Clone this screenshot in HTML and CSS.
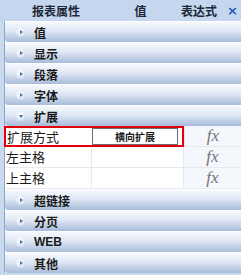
FILE: index.html
```html
<html>
  <head>
    <title>报表属性</title>
    <link rel="stylesheet" href="styles.css">
  </head>
  <body>
    <div class="panel">
      <div class="header">
        <span class="h-name">报表属性</span>
        <span class="h-value">值</span>
        <span class="h-expr">表达式</span>
        <span class="h-close">×</span>
      </div>
      <div class="body">
        <div class="group"><span class="dot"></span>值</div>
        <div class="group"><span class="dot"></span>显示</div>
        <div class="group"><span class="dot"></span>段落</div>
        <div class="group"><span class="dot"></span>字体</div>
        <div class="group open"><span class="dot"></span>扩展</div>
        <div class="prop selected">
          <div class="p-name">扩展方式</div>
          <div class="p-value"><span class="box">横向扩展</span></div>
          <div class="p-expr">fx</div>
        </div>
        <div class="prop">
          <div class="p-name">左主格</div>
          <div class="p-value"></div>
          <div class="p-expr">fx</div>
        </div>
        <div class="prop">
          <div class="p-name">上主格</div>
          <div class="p-value"></div>
          <div class="p-expr">fx</div>
        </div>
        <div class="group"><span class="dot"></span>超链接</div>
        <div class="group"><span class="dot"></span>分页</div>
        <div class="group latin"><span class="dot"></span>WEB</div>
        <div class="group"><span class="dot"></span>其他</div>
      </div>
    </div>
  </body>
</html>
```

FILE: styles.css
```css
body {
  margin: 0;
  font-family: "Noto Sans CJK SC", "Liberation Sans", sans-serif;
  color: #1a1a1a;
  background: #ffffff;
}
.panel {
  width: 241px;
  height: 275px;
  overflow: hidden;
  background: #c9d9ee;
}
/* header row */
.header {
  display: flex;
  align-items: center;
  height: 21px;
  background: #c5d7ee;
  font-size: 12px;
  font-weight: bold;
  color: #1e2a3a;
}
.h-name {
  width: 100px;
  padding-left: 32px;
  box-sizing: border-box;
}
.h-value {
  width: 81px;
  text-align: center;
}
.h-expr {
  width: 46px;
}
.h-close {
  color: #1c56b8;
  font-family: "DejaVu Sans", sans-serif;
  font-size: 13px;
}
.body {
  margin-left: 4px;
  border-left: 1px solid #8ea5c8;
  background: #ffffff;
}
/* collapsible groups */
.group {
  display: flex;
  align-items: center;
  height: 20px;
  border-top: 1px solid #ffffff;
  border-radius: 3px 0 0 3px;
  background: linear-gradient(#f6f9fe, #dfe7f3 45%, #a8bbd9);
  font-size: 12px;
  font-weight: bold;
  color: #1a1a1a;
}
.group.latin {
  font-family: "Liberation Sans", sans-serif;
  font-size: 12px;
}
.dot {
  position: relative;
  width: 10px;
  height: 10px;
  margin: 0 8px 0 11px;
  border-radius: 50%;
  background: radial-gradient(circle at 40% 35%, #ffffff, #dce6f4 60%, #b8c8e2);
}
.dot::after {
  content: "";
  position: absolute;
  left: 4px;
  top: 3px;
  border-left: 3px solid #4f6f9f;
  border-top: 2px solid transparent;
  border-bottom: 2px solid transparent;
}
.group.open .dot::after {
  left: 3px;
  top: 4px;
  border-top: 3px solid #4f6f9f;
  border-left: 2px solid transparent;
  border-right: 2px solid transparent;
  border-bottom: 0;
}
/* property rows */
.prop {
  display: flex;
  height: 20px;
  border-bottom: 1px solid #e6eaf0;
  font-size: 13px;
}
.p-name {
  width: 85px;
  padding-left: 1px;
  line-height: 20px;
}
.p-value {
  width: 91px;
  display: flex;
  align-items: center;
  border-left: 1px solid #e6eaf0;
}
.p-expr {
  flex: 1;
  text-align: center;
  background: #f4f7fc;
  border-left: 1px solid #e6eaf0;
  color: #757575;
  font-family: "Liberation Serif", serif;
  font-style: italic;
  font-size: 17px;
  line-height: 19px;
}
.prop.selected {
  height: 21px;
  border-bottom: 0;
}
.prop.selected .p-name,
.prop.selected .p-value {
  border-top: 2px solid #e4000b;
  border-bottom: 2px solid #e4000b;
  line-height: 17px;
}
.prop.selected .p-name {
  border-left: 2px solid #e4000b;
  margin-left: -1px;
}
.prop.selected .p-value {
  border-right: 2px solid #e4000b;
  border-left: 0;
  width: 90px;
}
.prop.selected .p-expr {
  border-bottom: 1px solid #e6eaf0;
}
.box {
  display: block;
  width: 84px;
  height: 15px;
  border: 1px solid #6d6d6d;
  font-size: 10px;
  font-weight: bold;
  line-height: 15px;
  text-align: center;
}
```
